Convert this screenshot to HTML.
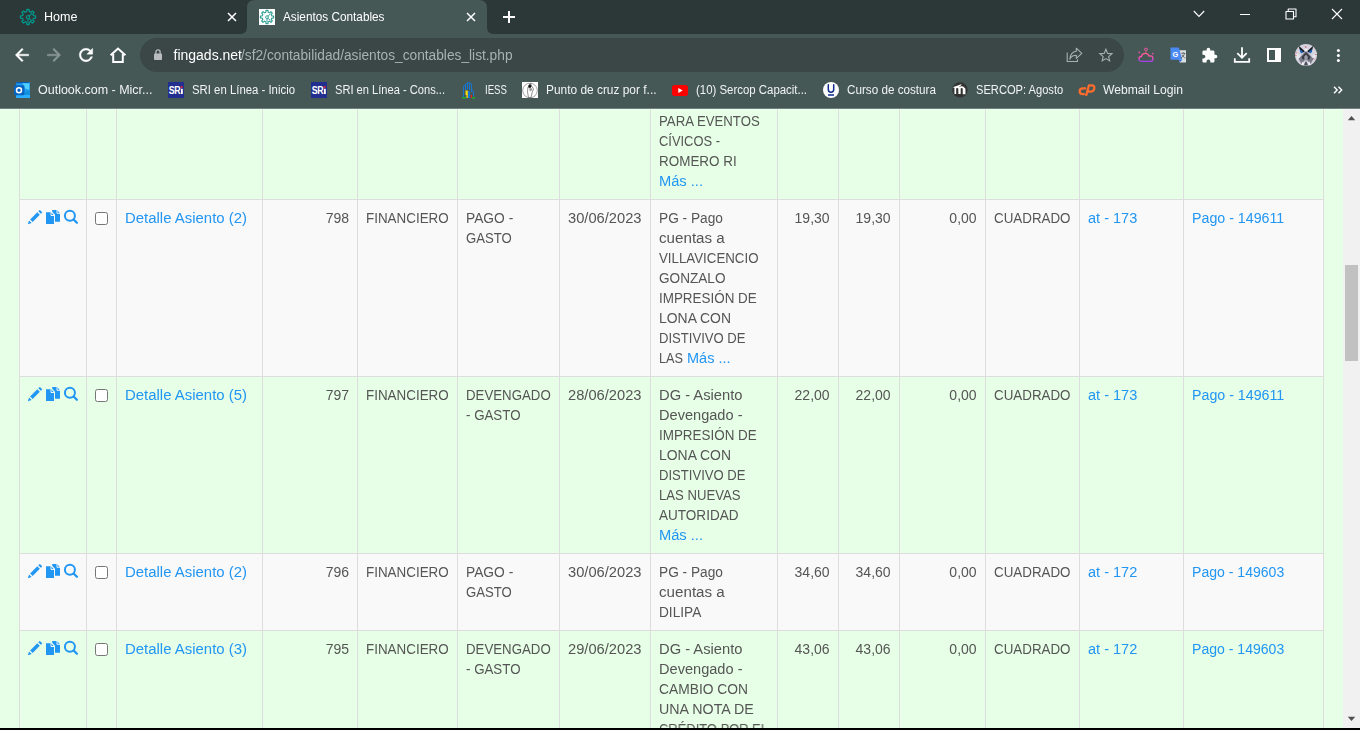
<!DOCTYPE html>
<html><head><meta charset="utf-8"><title>Asientos Contables</title>
<style>
html,body{margin:0;padding:0;width:1360px;height:730px;overflow:hidden;background:#e6ffe6;font-family:"Liberation Sans",sans-serif;}
.abs,.t,.r,.v,.h{position:absolute}
.t{white-space:pre;line-height:20px;height:20px;transform-origin:0 50%}
.r{left:19px;width:1305px}
.v{top:109px;width:1px;height:619px;background:#ddd}
.h{left:19px;width:1305px;height:1px;background:#ddd}
svg{position:absolute;overflow:visible}
.cb{position:absolute;left:95px;width:13px;height:13px;box-sizing:border-box;border:1px solid #767676;border-radius:2.5px;background:#fff}
</style></head><body>
<!-- page rows -->
<div class="r" style="top:200px;height:176px;background:#f9f9f9"></div>
<div class="r" style="top:554px;height:76px;background:#f9f9f9"></div>
<!-- horizontal borders -->
<div class="h" style="top:199px"></div><div class="h" style="top:376px"></div><div class="h" style="top:553px"></div><div class="h" style="top:630px"></div>
<!-- vertical borders -->
<div class="v" style="left:19px"></div><div class="v" style="left:86px"></div><div class="v" style="left:116px"></div><div class="v" style="left:262px"></div><div class="v" style="left:357px"></div><div class="v" style="left:457px"></div><div class="v" style="left:559px"></div><div class="v" style="left:650px"></div><div class="v" style="left:777px"></div><div class="v" style="left:838px"></div><div class="v" style="left:899px"></div><div class="v" style="left:985px"></div><div class="v" style="left:1079px"></div><div class="v" style="left:1183px"></div><div class="v" style="left:1323px"></div>
<!-- checkboxes -->
<div class="cb" style="top:212px"></div><div class="cb" style="top:389px"></div><div class="cb" style="top:566px"></div><div class="cb" style="top:643px"></div>
<svg style="left:28px;top:210px" width="14" height="14" viewBox="0 0 14 14"><g transform="matrix(0.011667,0,0,-0.011667,0,14.1167)" fill="#2196f3"><path d="M1011 1210q19 0 33 -13l153 -153q13 -14 13 -33t-13 -33l-99 -92l-214 214l95 96q13 14 32 14zM1013 800l-615 -614l-214 214l614 614zM317 96l-333 -112l110 335z"/></g></svg><svg style="left:46px;top:210px" width="14" height="14" viewBox="0 0 14 14"><path d="M0 2.200H5L8 5.500V14H0Z" fill="#2196f3"/><path d="M5 2.200V5.500H8" stroke="#fff" stroke-width="0.900" fill="none"/><path d="M6.200 0H11L14 3.300V11.800H9V4.700L6.200 1.700Z" fill="#2196f3"/><path d="M11 0V3.300H14" stroke="#fff" stroke-width="0.900" fill="none"/></svg><svg style="left:63px;top:210px" width="15" height="14" viewBox="0 0 15 14"><circle cx="6.900" cy="5.800" r="5" fill="none" stroke="#2196f3" stroke-width="2"/><path d="M10.600 9.500L13.900 12.800" stroke="#2196f3" stroke-width="2.300" stroke-linecap="round"/></svg><svg style="left:28px;top:387px" width="14" height="14" viewBox="0 0 14 14"><g transform="matrix(0.011667,0,0,-0.011667,0,14.1167)" fill="#2196f3"><path d="M1011 1210q19 0 33 -13l153 -153q13 -14 13 -33t-13 -33l-99 -92l-214 214l95 96q13 14 32 14zM1013 800l-615 -614l-214 214l614 614zM317 96l-333 -112l110 335z"/></g></svg><svg style="left:46px;top:387px" width="14" height="14" viewBox="0 0 14 14"><path d="M0 2.200H5L8 5.500V14H0Z" fill="#2196f3"/><path d="M5 2.200V5.500H8" stroke="#fff" stroke-width="0.900" fill="none"/><path d="M6.200 0H11L14 3.300V11.800H9V4.700L6.200 1.700Z" fill="#2196f3"/><path d="M11 0V3.300H14" stroke="#fff" stroke-width="0.900" fill="none"/></svg><svg style="left:63px;top:387px" width="15" height="14" viewBox="0 0 15 14"><circle cx="6.900" cy="5.800" r="5" fill="none" stroke="#2196f3" stroke-width="2"/><path d="M10.600 9.500L13.900 12.800" stroke="#2196f3" stroke-width="2.300" stroke-linecap="round"/></svg><svg style="left:28px;top:564px" width="14" height="14" viewBox="0 0 14 14"><g transform="matrix(0.011667,0,0,-0.011667,0,14.1167)" fill="#2196f3"><path d="M1011 1210q19 0 33 -13l153 -153q13 -14 13 -33t-13 -33l-99 -92l-214 214l95 96q13 14 32 14zM1013 800l-615 -614l-214 214l614 614zM317 96l-333 -112l110 335z"/></g></svg><svg style="left:46px;top:564px" width="14" height="14" viewBox="0 0 14 14"><path d="M0 2.200H5L8 5.500V14H0Z" fill="#2196f3"/><path d="M5 2.200V5.500H8" stroke="#fff" stroke-width="0.900" fill="none"/><path d="M6.200 0H11L14 3.300V11.800H9V4.700L6.200 1.700Z" fill="#2196f3"/><path d="M11 0V3.300H14" stroke="#fff" stroke-width="0.900" fill="none"/></svg><svg style="left:63px;top:564px" width="15" height="14" viewBox="0 0 15 14"><circle cx="6.900" cy="5.800" r="5" fill="none" stroke="#2196f3" stroke-width="2"/><path d="M10.600 9.500L13.900 12.800" stroke="#2196f3" stroke-width="2.300" stroke-linecap="round"/></svg><svg style="left:28px;top:641px" width="14" height="14" viewBox="0 0 14 14"><g transform="matrix(0.011667,0,0,-0.011667,0,14.1167)" fill="#2196f3"><path d="M1011 1210q19 0 33 -13l153 -153q13 -14 13 -33t-13 -33l-99 -92l-214 214l95 96q13 14 32 14zM1013 800l-615 -614l-214 214l614 614zM317 96l-333 -112l110 335z"/></g></svg><svg style="left:46px;top:641px" width="14" height="14" viewBox="0 0 14 14"><path d="M0 2.200H5L8 5.500V14H0Z" fill="#2196f3"/><path d="M5 2.200V5.500H8" stroke="#fff" stroke-width="0.900" fill="none"/><path d="M6.200 0H11L14 3.300V11.800H9V4.700L6.200 1.700Z" fill="#2196f3"/><path d="M11 0V3.300H14" stroke="#fff" stroke-width="0.900" fill="none"/></svg><svg style="left:63px;top:641px" width="15" height="14" viewBox="0 0 15 14"><circle cx="6.900" cy="5.800" r="5" fill="none" stroke="#2196f3" stroke-width="2"/><path d="M10.600 9.500L13.900 12.800" stroke="#2196f3" stroke-width="2.300" stroke-linecap="round"/></svg>
<!-- scrollbar -->
<div class="abs" style="left:1343px;top:109px;width:17px;height:619px;background:#f1f1f1"></div>
<div class="abs" style="left:1345px;top:265px;width:13px;height:96px;background:#c1c1c1"></div>
<!-- chrome -->
<div class="abs" style="left:0;top:0;width:1360px;height:34px;background:#2c3837"></div>
<div class="abs" style="left:0;top:34px;width:1360px;height:74px;background:#455856"></div><div class="abs" style="left:0;top:108px;width:1360px;height:1px;background:#6f807e"></div><div class="abs" style="left:0;top:109px;width:1360px;height:1px;background:rgba(255,255,255,0.3)"></div>
<svg style="left:0;top:0" width="1360" height="34" viewBox="0 0 1360 34"><path d="M239 34C245 34 247 32 247 26V8Q247 0 255 0H479Q487 0 487 8V26C487 32 489 34 495 34Z" fill="#455856"/></svg>
<div class="abs" style="left:140px;top:38px;width:984px;height:34px;border-radius:17px;background:#3a4746"></div>
<!-- tab favicons -->
<svg style="left:20px;top:9px" width="16" height="16" viewBox="0 0 16 16"><path d="M6.69 2.55 L6.87 0.48 L9.13 0.48 L9.31 2.55 L10.93 3.23 L12.52 1.89 L14.11 3.48 L12.77 5.07 L13.45 6.69 L15.52 6.87 L15.52 9.13 L13.45 9.31 L12.77 10.93 L14.11 12.52 L12.52 14.11 L10.93 12.77 L9.31 13.45 L9.13 15.52 L6.87 15.52 L6.69 13.45 L5.07 12.77 L3.48 14.11 L1.89 12.52 L3.23 10.93 L2.55 9.31 L0.48 9.13 L0.48 6.87 L2.55 6.69 L3.23 5.07 L1.89 3.48 L3.48 1.89 L5.07 3.23Z" fill="none" stroke="#00968a" stroke-width="1.3" stroke-linejoin="round"/><circle cx="8" cy="8.2" r="1.6" fill="none" stroke="#00968a" stroke-width="1.1"/><path d="M9.2 7 L12 4.4 M8 9.8 V13.5 M9 9.4 L11.8 12" stroke="#00968a" stroke-width="1.1" fill="none"/></svg>
<div class="abs" style="left:259px;top:9px;width:16px;height:16px;background:#fff"></div>
<svg style="left:260px;top:10px" width="14" height="14" viewBox="0 0 16 16"><path d="M6.69 2.55 L6.87 0.48 L9.13 0.48 L9.31 2.55 L10.93 3.23 L12.52 1.89 L14.11 3.48 L12.77 5.07 L13.45 6.69 L15.52 6.87 L15.52 9.13 L13.45 9.31 L12.77 10.93 L14.11 12.52 L12.52 14.11 L10.93 12.77 L9.31 13.45 L9.13 15.52 L6.87 15.52 L6.69 13.45 L5.07 12.77 L3.48 14.11 L1.89 12.52 L3.23 10.93 L2.55 9.31 L0.48 9.13 L0.48 6.87 L2.55 6.69 L3.23 5.07 L1.89 3.48 L3.48 1.89 L5.07 3.23Z" fill="none" stroke="#2e9e95" stroke-width="1.3" stroke-linejoin="round"/><circle cx="8" cy="8.2" r="1.6" fill="none" stroke="#2e9e95" stroke-width="1.1"/><path d="M9.2 7 L12 4.4 M8 9.8 V13.5 M9 9.4 L11.8 12" stroke="#2e9e95" stroke-width="1.1" fill="none"/></svg>
<!-- tab close / new tab -->
<svg style="left:227px;top:12px" width="10" height="10" viewBox="0 0 10 10"><path d="M1 1L9 9M9 1L1 9" stroke="#fff" stroke-width="1.5"/></svg>
<svg style="left:466px;top:12px" width="10" height="10" viewBox="0 0 10 10"><path d="M1 1L9 9M9 1L1 9" stroke="#fff" stroke-width="1.5"/></svg>
<svg style="left:502px;top:10px" width="14" height="14" viewBox="0 0 14 14"><path d="M7 1V13M1 7H13" stroke="#fff" stroke-width="2"/></svg>
<!-- window controls -->
<svg style="left:1193px;top:10px" width="12" height="8" viewBox="0 0 12 8"><path d="M0.8 1L6 6.4L11.2 1" stroke="#fff" stroke-width="1.1" fill="none"/></svg>
<div class="abs" style="left:1240px;top:14px;width:10px;height:1px;background:#fff"></div>
<svg style="left:1285px;top:8px" width="12" height="12" viewBox="0 0 12 12"><path d="M1 3.5H8.5V11H1Z M3.2 3.5V1H11V8.8H8.5" stroke="#fff" stroke-width="1.1" fill="none" stroke-linejoin="round"/></svg>
<svg style="left:1332px;top:9px" width="10" height="10" viewBox="0 0 10 10"><path d="M0 0L10 10M10 0L0 10" stroke="#fff" stroke-width="1.1"/></svg>
<!-- nav icons -->
<svg style="left:12px;top:45px" width="20" height="20" viewBox="0 0 24 24"><path d="M20 11H7.830l5.590-5.590L12 4l-8 8 8 8 1.410-1.410L7.830 13H20v-2z" fill="#fff" stroke="#fff" stroke-width="0.500"/></svg>
<svg style="left:44px;top:45px" width="20" height="20" viewBox="0 0 24 24"><path d="M12 4l-1.410 1.410L16.170 11H4v2h12.170l-5.580 5.590L12 20l8-8z" fill="#8b9897" stroke="#8b9897" stroke-width="0.500"/></svg>
<svg style="left:76px;top:45px" width="20" height="20" viewBox="0 0 24 24"><path d="M17.650 6.350C16.200 4.900 14.210 4 12 4c-4.420 0-7.990 3.580-7.990 8s3.570 8 7.990 8c3.730 0 6.840-2.550 7.730-6h-2.080c-.820 2.330-3.040 4-5.650 4-3.310 0-6-2.690-6-6s2.690-6 6-6c1.660 0 3.140.690 4.220 1.780L13 11h7V4l-2.350 2.350z" fill="#fff" stroke="#fff" stroke-width="0.500"/></svg>
<svg style="left:108px;top:46px" width="20" height="18" viewBox="0 0 20 18"><path d="M2.600 9.300L10 2.500L17.400 9.300" stroke="#fff" stroke-width="2" fill="none"/><path d="M5.200 8V16H14.800V8" stroke="#fff" stroke-width="2" fill="none"/></svg>
<!-- lock -->
<svg style="left:153px;top:49px" width="10" height="12" viewBox="0 0 10 12"><rect x="1" y="4.400" width="8" height="6.600" rx="0.800" fill="#b9bdbe"/><path d="M2.900 5V3a2.100 2.100 0 0 1 4.200 0V5" stroke="#b9bdbe" stroke-width="1.300" fill="none"/></svg>
<!-- share -->
<svg style="left:1066px;top:47px" width="17" height="16" viewBox="0 0 17 16"><path d="M1.200 5.500V14.500H11.500V12.300" stroke="#a6b0af" stroke-width="1.100" fill="none"/><path d="M10.300 1.200L15.800 6.300L10.300 11.300V8.300C7 8.300 5 9.500 3.800 12.300C4.200 8 6.300 4.800 10.300 4.300Z" stroke="#a6b0af" stroke-width="1.100" fill="none" stroke-linejoin="round"/></svg>
<!-- star -->
<svg style="left:1098px;top:47px" width="16" height="16" viewBox="-0.700 -0.900 17.600 17.600"><path d="M8 1.600L9.900 6.100L14.700 6.500L11 9.700L12.100 14.400L8 11.900L3.900 14.400L5 9.700L1.300 6.500L6.100 6.100Z" stroke="#a6b0af" stroke-width="1.200" fill="none" stroke-linejoin="miter"/></svg>
<!-- cloud extension -->
<svg style="left:1138px;top:47px" width="16" height="16" viewBox="0 0 16 16"><defs><linearGradient id="cg" x1="0" y1="0" x2="0" y2="1"><stop offset="0" stop-color="#ff5f8f"/><stop offset="0.550" stop-color="#f04fb0"/><stop offset="1" stop-color="#a43ff0"/></linearGradient></defs><path d="M3.600 14.400C1.800 14.400 0.900 13.200 0.900 11.900C0.900 10.500 2 9.500 3.300 9.500C3.700 7.600 5.300 6.400 7.200 6.400C9 6.400 10.500 7.500 11 9.100C11.400 8.900 11.800 8.900 12.200 8.900C13.800 8.900 15 10.100 15 11.700C15 13.200 13.800 14.400 12.300 14.400Z" stroke="url(#cg)" stroke-width="1.300" fill="none"/><ellipse cx="8" cy="2.300" rx="1.600" ry="1.100" stroke="#f05aa8" stroke-width="0.900" fill="none"/><path d="M8 3.500V5.800" stroke="#ff6a8a" stroke-width="0.800"/><circle cx="1.300" cy="5.400" r="0.900" fill="#e44fb0"/><circle cx="14.800" cy="6.600" r="0.900" fill="#e44fb0"/></svg>
<!-- translate extension -->
<svg style="left:1170px;top:47px" width="17" height="17" viewBox="0 0 17 17"><path d="M6.500 3.300H16V15.500H9.600Z" fill="#dcdfe0"/><path d="M9.600 15.500L12.300 12.800H9Z" fill="#3367d6"/><path d="M0.500 0.500H8.800L12.300 12.800H0.500Z" fill="#4a8af4"/><text x="2.600" y="9.600" font-family="Liberation Sans,sans-serif" font-size="7.500" font-weight="700" fill="#fff">G</text><path d="M11.300 6.300H15.300M13.300 5.400V6.300M14.600 6.300C14.200 8.300 12.800 10 11 11M12 7.800C12.800 9.500 14 10.500 15.300 11.200" stroke="#555c60" stroke-width="0.900" fill="none"/></svg>
<!-- puzzle -->
<svg style="left:1201px;top:47px" width="17" height="17" viewBox="0 0 24 24"><path d="M20.500 11H19V7c0-1.100-.9-2-2-2h-4V3.500C13 2.120 11.880 1 10.500 1S8 2.120 8 3.500V5H4c-1.100 0-1.990.9-1.990 2v3.800H3.500c1.490 0 2.700 1.210 2.700 2.700s-1.210 2.700-2.700 2.700H2V20c0 1.100.9 2 2 2h3.800v-1.500c0-1.490 1.210-2.700 2.700-2.700 1.490 0 2.700 1.210 2.700 2.700V22H17c1.100 0 2-.9 2-2v-4h1.500c1.380 0 2.500-1.120 2.500-2.500S21.880 11 20.500 11z" fill="#fff"/></svg>
<!-- download -->
<svg style="left:1233px;top:46px" width="18" height="18" viewBox="0 0 18 18"><path d="M9 1.200V11.500M4.300 7.200L9 11.800L13.700 7.200" stroke="#fff" stroke-width="1.800" fill="none"/><path d="M1.800 12.200V15.800H16.200V12.200" stroke="#fff" stroke-width="1.800" fill="none"/></svg>
<!-- side panel -->
<div class="abs" style="left:1267px;top:48px;width:14px;height:14px;box-sizing:border-box;border:2px solid #fff;border-right-width:6.500px"></div>
<!-- avatar -->
<svg style="left:1295px;top:44px" width="22" height="22" viewBox="0 0 22 22"><defs><clipPath id="avc"><circle cx="11" cy="11" r="11"/></clipPath></defs><g clip-path="url(#avc)"><rect width="22" height="22" fill="#d6d3df"/><path d="M0 8L5 12L3 17Z M22 8L17 12L19 17Z" fill="#e8e6ee"/><path d="M11 6.500L18.500 15L15.500 20L11 15L6.500 20L3.500 15Z" fill="#7b7e8a"/><path d="M11 8L15.500 13L14 16L11 13L8 16L6.500 13Z" fill="#3a3c46"/><path d="M11 10.500L13 13L11 17.500L9 13Z" fill="#9a9ca8"/><path d="M11 17L13.500 21.500H8.500Z" fill="#4a4c58"/><path d="M7.500 17.500L9.500 20.500L6.500 21Z M14.500 17.500L12.500 20.500L15.500 21Z" fill="#f4f3f8"/><path d="M3.800 1.800L9.800 7.200L8.200 8.600L4.600 5.600Z M18.200 1.800L12.200 7.200L13.800 8.600L17.400 5.600Z" fill="#14181f"/><path d="M4.800 5L8.400 8.200L6.400 9.600L5 7.800Z M17.200 5L13.600 8.200L15.600 9.600L17 7.800Z" fill="#1f63b8"/><path d="M9.500 5.500L11 4.500L12.500 5.500L11 8Z" fill="#f6f5fa"/><path d="M0.300 9H1.800M0.300 11.500H1.500M20 10.500H21.700M18.500 14L19.200 15.500M10.800 2V4" stroke="#cc4a52" stroke-width="0.800"/></g></svg>
<!-- menu dots -->
<svg style="left:1336px;top:48px" width="5" height="15" viewBox="0 0 5 15"><circle cx="2.400" cy="2.500" r="1.500" fill="#fff"/><circle cx="2.400" cy="7.500" r="1.500" fill="#fff"/><circle cx="2.400" cy="12.500" r="1.500" fill="#fff"/></svg>
<!-- bookmarks favicons -->
<svg style="left:14px;top:82px" width="16" height="16" viewBox="0 0 16 16"><rect x="2.200" y="0" width="13.800" height="16" fill="#1d9bf0"/><rect x="2.200" y="0" width="13" height="1.300" fill="#0a5cbc"/><path d="M8.500 1.300H15.200V8L11 6.500Z" fill="#4fd0ff"/><path d="M16 7.600L9 11.200L16 15.500Z" fill="#1490e0"/><path d="M2.200 13H16V16H2.200Z" fill="#2bb0ff"/><rect x="0" y="3.200" width="10.400" height="10" rx="0.800" fill="#0763c0"/><circle cx="5" cy="8.200" r="2.500" fill="none" stroke="#fff" stroke-width="1.500"/></svg>
<svg style="left:168px;top:82px" width="16" height="16" viewBox="0 0 16 16"><rect width="16" height="16" fill="#232f8e"/><text transform="translate(0.700,12) scale(0.880,1.120)" font-family="Liberation Sans,sans-serif" font-size="10" font-weight="700" fill="#fff" letter-spacing="-0.300">SR</text><rect x="12.900" y="6.800" width="1.900" height="5.200" fill="#fff"/><circle cx="13.700" cy="5" r="1.100" fill="#e0203a"/></svg>
<svg style="left:311px;top:82px" width="16" height="16" viewBox="0 0 16 16"><rect width="16" height="16" fill="#232f8e"/><text transform="translate(0.700,12) scale(0.880,1.120)" font-family="Liberation Sans,sans-serif" font-size="10" font-weight="700" fill="#fff" letter-spacing="-0.300">SR</text><rect x="12.900" y="6.800" width="1.900" height="5.200" fill="#fff"/><circle cx="13.700" cy="5" r="1.100" fill="#e0203a"/></svg>
<!-- IESS -->
<svg style="left:461px;top:81px" width="16" height="18" viewBox="0 0 16 18"><path d="M2.500 16V5.500L4.500 3.300V9 M4.500 3.300L6.500 1.800V8.500 M6.500 1.800H8.500V9 M8.500 1.800L10.500 3V11 M10.500 8.500L12.500 10V15" stroke="#1577d3" stroke-width="1" fill="none"/><path d="M4.500 9.500H6.800V17H5.500V14H4.500Z" fill="#f5dd10"/><path d="M7 10H9V17H7Z" fill="#1577d3"/><path d="M9.500 14H11V17H10Z" fill="#e8261c"/><path d="M1 16.200H5V17.400H1Z M11 16.200H14.200V17.400H11Z" fill="#10c020"/></svg>
<!-- punto de cruz -->
<div class="abs" style="left:522px;top:82px;width:16px;height:16px;background:#fff"></div>
<svg style="left:522px;top:82px" width="16" height="16" viewBox="0 0 16 16"><circle cx="8" cy="8.500" r="7.300" fill="none" stroke="#777" stroke-width="0.700"/><path d="M7 3L8.500 1.500L10 4.500L11.500 7L10 11L9 15.500H6.500L5.500 10L5.800 6Z" fill="none" stroke="#666" stroke-width="0.700"/><path d="M6.500 3.500L8.300 2L9.500 4.500L8.500 6L6.300 5.500Z" fill="#111"/><path d="M7 6.500L9.500 6L10.500 8L8 9.500Z" fill="#999"/></svg>
<!-- youtube -->
<svg style="left:672px;top:84.500px" width="16" height="11" viewBox="0 0 16 11"><rect width="16" height="11" rx="2.800" fill="#ff0000"/><path d="M6.300 2.900L10.700 5.500L6.300 8.100Z" fill="#fff"/></svg>
<!-- U -->
<svg style="left:823px;top:82px" width="16" height="16" viewBox="0 0 16 16"><circle cx="8" cy="8" r="8" fill="#fff"/><path d="M5.300 2.800V7.600A2.700 2.700 0 0 0 10.700 7.600V2.800" stroke="#0d2b8c" stroke-width="1.500" fill="none" stroke-linecap="round"/><path d="M5 13H11" stroke="#0d2b8c" stroke-width="1.500"/></svg>
<!-- moodle -->
<svg style="left:952px;top:82px" width="16" height="16" viewBox="0 0 16 16"><circle cx="8" cy="7.900" r="7.700" fill="#333"/><path d="M3.300 12V7.200A1.900 1.900 0 0 1 7.200 6.800V12 M7.800 12V7.200A1.900 1.900 0 0 1 11.600 6.800V12.200 M12.600 12.200V7.500A1.500 1.500 0 0 0 11 6" stroke="#fff" stroke-width="1.700" fill="none"/><path d="M1 5.300L9.800 2L8 4.600L3 6.300Z" fill="#fff"/></svg>
<!-- cpanel -->
<svg style="left:1078px;top:83px" width="18" height="14" viewBox="0 0 18 14"><path d="M7.200 5.400H4.900C2.700 5.400 1.700 7 1.700 8.300C1.700 9.800 2.700 11.200 4.600 11.200H6" stroke="#ff6c2c" stroke-width="2.300" fill="none" stroke-linecap="round"/><path d="M8.300 12L11 2.300H13.600C15.700 2.300 16.700 3.900 16.300 5.600C15.900 7.500 14.500 8.700 12.500 8.700H10.800" stroke="#ff6c2c" stroke-width="2.300" fill="none" stroke-linecap="round" stroke-linejoin="round"/></svg>
<!-- more bookmarks chevron -->
<svg style="left:1333px;top:86px" width="10" height="8" viewBox="0 0 10 8"><path d="M1 0.800L4.200 4L1 7.200M5.500 0.800L8.700 4L5.500 7.200" stroke="#fff" stroke-width="1.400" fill="none"/></svg>
<!-- scrollbar arrows -->
<svg style="left:1347px;top:115px" width="9" height="6" viewBox="0 0 9 6"><path d="M0.800 5.200L4.500 1L8.200 5.200Z" fill="#505050"/></svg>
<svg style="left:1347px;top:716px" width="9" height="6" viewBox="0 0 9 6"><path d="M0.800 0.800L4.500 5L8.200 0.800Z" fill="#505050"/></svg>

<div id="txt" style="position:absolute;left:0;top:0;width:1360px;height:730px;will-change:transform"><span class="t" style="top:7.00px;font-size:12px;color:#ffffff;transform:scaleX(1.0464);left:43.50px;">Home</span>
<span class="t" style="top:7.00px;font-size:12px;color:#ffffff;transform:scaleX(0.9816);left:282.50px;">Asientos Contables</span>
<span class="t" style="top:45.00px;font-size:14px;color:#ffffff;left:173.50px;">fingads.net</span>
<span class="t" style="top:45.00px;font-size:14px;color:#a7b2b1;transform:scaleX(0.9799);left:241.00px;">/sf2/contabilidad/asientos_contables_list.php</span>
<span class="t" style="top:80.00px;font-size:12px;color:#f1f3f4;transform:scaleX(1.0406);left:38.00px;">Outlook.com - Micr...</span>
<span class="t" style="top:80.00px;font-size:12px;color:#f1f3f4;transform:scaleX(0.9473);left:192.00px;">SRI en Línea - Inicio</span>
<span class="t" style="top:80.00px;font-size:12px;color:#f1f3f4;transform:scaleX(0.9264);left:335.00px;">SRI en Línea - Cons...</span>
<span class="t" style="top:80.00px;font-size:12px;color:#f1f3f4;transform:scaleX(0.8041);left:485.00px;">IESS</span>
<span class="t" style="top:80.00px;font-size:12px;color:#f1f3f4;transform:scaleX(0.9919);left:545.50px;">Punto de cruz por f...</span>
<span class="t" style="top:80.00px;font-size:12px;color:#f1f3f4;transform:scaleX(0.9510);left:695.50px;">(10) Sercop Capacit...</span>
<span class="t" style="top:80.00px;font-size:12px;color:#f1f3f4;transform:scaleX(0.9738);left:847.00px;">Curso de costura</span>
<span class="t" style="top:80.00px;font-size:12px;color:#f1f3f4;transform:scaleX(0.9272);left:975.90px;">SERCOP: Agosto</span>
<span class="t" style="top:80.00px;font-size:12px;color:#f1f3f4;transform:scaleX(1.0107);left:1102.50px;">Webmail Login</span>
<span class="t" style="top:111.00px;font-size:14px;color:#555555;transform:scaleX(0.9428);left:659.00px;">PARA EVENTOS</span>
<span class="t" style="top:131.00px;font-size:14px;color:#555555;transform:scaleX(0.9225);left:659.00px;">CÍVICOS -</span>
<span class="t" style="top:151.00px;font-size:14px;color:#555555;transform:scaleX(0.9612);left:659.00px;">ROMERO RI</span>
<span class="t" style="top:171.00px;font-size:14px;color:#2196f3;transform:scaleX(1.0472);left:658.50px;">Más ...</span>
<span class="t" style="top:208.00px;font-size:14px;color:#2196f3;transform:scaleX(1.0664);left:124.50px;">Detalle Asiento (2)</span>
<span class="t" style="top:208.00px;font-size:14px;color:#555555;right:1011.00px;">798</span>
<span class="t" style="top:208.00px;font-size:14px;color:#555555;transform:scaleX(0.9584);left:365.75px;">FINANCIERO</span>
<span class="t" style="top:208.00px;font-size:14px;color:#555555;transform:scaleX(0.9850);left:465.75px;">PAGO -</span>
<span class="t" style="top:228.00px;font-size:14px;color:#555555;transform:scaleX(0.9382);left:465.75px;">GASTO</span>
<span class="t" style="top:208.00px;font-size:14px;color:#555555;transform:scaleX(1.0488);left:568.25px;">30/06/2023</span>
<span class="t" style="top:208.00px;font-size:14px;color:#555555;transform:scaleX(0.9790);left:659.00px;">PG - Pago</span>
<span class="t" style="top:228.00px;font-size:14px;color:#555555;transform:scaleX(1.0829);left:658.50px;">cuentas a</span>
<span class="t" style="top:248.00px;font-size:14px;color:#555555;transform:scaleX(0.9496);left:658.50px;">VILLAVICENCIO</span>
<span class="t" style="top:268.00px;font-size:14px;color:#555555;transform:scaleX(0.9712);left:659.00px;">GONZALO</span>
<span class="t" style="top:288.00px;font-size:14px;color:#555555;transform:scaleX(0.9592);left:659.00px;">IMPRESIÓN DE</span>
<span class="t" style="top:308.00px;font-size:14px;color:#555555;transform:scaleX(0.9950);left:659.00px;">LONA CON</span>
<span class="t" style="top:328.00px;font-size:14px;color:#555555;transform:scaleX(0.9343);left:659.00px;">DISTIVIVO DE</span>
<span class="t" style="top:348.00px;font-size:14px;color:#555555;transform:scaleX(0.9067);left:659.00px;">LAS</span>
<span class="t" style="top:348.00px;font-size:14px;color:#2196f3;transform:scaleX(1.0353);left:687.00px;">Más ...</span>
<span class="t" style="top:208.00px;font-size:14px;color:#555555;right:530.40px;">19,30</span>
<span class="t" style="top:208.00px;font-size:14px;color:#555555;right:469.40px;">19,30</span>
<span class="t" style="top:208.00px;font-size:14px;color:#555555;right:383.40px;">0,00</span>
<span class="t" style="top:208.00px;font-size:14px;color:#555555;transform:scaleX(0.9548);left:994.00px;">CUADRADO</span>
<span class="t" style="top:208.00px;font-size:14px;color:#2196f3;transform:scaleX(1.0372);left:1088.25px;">at - 173</span>
<span class="t" style="top:208.00px;font-size:14px;color:#2196f3;transform:scaleX(1.0157);left:1192.00px;">Pago - 149611</span>
<span class="t" style="top:385.00px;font-size:14px;color:#2196f3;transform:scaleX(1.0664);left:124.50px;">Detalle Asiento (5)</span>
<span class="t" style="top:385.00px;font-size:14px;color:#555555;right:1011.00px;">797</span>
<span class="t" style="top:385.00px;font-size:14px;color:#555555;transform:scaleX(0.9584);left:365.75px;">FINANCIERO</span>
<span class="t" style="top:385.00px;font-size:14px;color:#555555;transform:scaleX(0.9473);left:465.75px;">DEVENGADO</span>
<span class="t" style="top:405.00px;font-size:14px;color:#555555;transform:scaleX(0.9509);left:465.75px;">- GASTO</span>
<span class="t" style="top:385.00px;font-size:14px;color:#555555;transform:scaleX(1.0488);left:568.25px;">28/06/2023</span>
<span class="t" style="top:385.00px;font-size:14px;color:#555555;transform:scaleX(1.0520);left:659.00px;">DG - Asiento</span>
<span class="t" style="top:405.00px;font-size:14px;color:#555555;transform:scaleX(1.0415);left:659.00px;">Devengado -</span>
<span class="t" style="top:425.00px;font-size:14px;color:#555555;transform:scaleX(0.9592);left:659.00px;">IMPRESIÓN DE</span>
<span class="t" style="top:445.00px;font-size:14px;color:#555555;transform:scaleX(0.9950);left:659.00px;">LONA CON</span>
<span class="t" style="top:465.00px;font-size:14px;color:#555555;transform:scaleX(0.9343);left:659.00px;">DISTIVIVO DE</span>
<span class="t" style="top:485.00px;font-size:14px;color:#555555;transform:scaleX(0.9380);left:659.00px;">LAS NUEVAS</span>
<span class="t" style="top:505.00px;font-size:14px;color:#555555;transform:scaleX(0.9671);left:659.00px;">AUTORIDAD</span>
<span class="t" style="top:525.00px;font-size:14px;color:#2196f3;transform:scaleX(1.0472);left:658.50px;">Más ...</span>
<span class="t" style="top:385.00px;font-size:14px;color:#555555;right:530.40px;">22,00</span>
<span class="t" style="top:385.00px;font-size:14px;color:#555555;right:469.40px;">22,00</span>
<span class="t" style="top:385.00px;font-size:14px;color:#555555;right:383.40px;">0,00</span>
<span class="t" style="top:385.00px;font-size:14px;color:#555555;transform:scaleX(0.9548);left:994.00px;">CUADRADO</span>
<span class="t" style="top:385.00px;font-size:14px;color:#2196f3;transform:scaleX(1.0372);left:1088.25px;">at - 173</span>
<span class="t" style="top:385.00px;font-size:14px;color:#2196f3;transform:scaleX(1.0157);left:1192.00px;">Pago - 149611</span>
<span class="t" style="top:562.00px;font-size:14px;color:#2196f3;transform:scaleX(1.0664);left:124.50px;">Detalle Asiento (2)</span>
<span class="t" style="top:562.00px;font-size:14px;color:#555555;right:1011.00px;">796</span>
<span class="t" style="top:562.00px;font-size:14px;color:#555555;transform:scaleX(0.9584);left:365.75px;">FINANCIERO</span>
<span class="t" style="top:562.00px;font-size:14px;color:#555555;transform:scaleX(0.9850);left:465.75px;">PAGO -</span>
<span class="t" style="top:582.00px;font-size:14px;color:#555555;transform:scaleX(0.9382);left:465.75px;">GASTO</span>
<span class="t" style="top:562.00px;font-size:14px;color:#555555;transform:scaleX(1.0488);left:568.25px;">30/06/2023</span>
<span class="t" style="top:562.00px;font-size:14px;color:#555555;transform:scaleX(0.9790);left:659.00px;">PG - Pago</span>
<span class="t" style="top:582.00px;font-size:14px;color:#555555;transform:scaleX(1.0829);left:658.50px;">cuentas a</span>
<span class="t" style="top:602.00px;font-size:14px;color:#555555;transform:scaleX(0.9755);left:659.00px;">DILIPA</span>
<span class="t" style="top:562.00px;font-size:14px;color:#555555;right:530.40px;">34,60</span>
<span class="t" style="top:562.00px;font-size:14px;color:#555555;right:469.40px;">34,60</span>
<span class="t" style="top:562.00px;font-size:14px;color:#555555;right:383.40px;">0,00</span>
<span class="t" style="top:562.00px;font-size:14px;color:#555555;transform:scaleX(0.9548);left:994.00px;">CUADRADO</span>
<span class="t" style="top:562.00px;font-size:14px;color:#2196f3;transform:scaleX(1.0372);left:1088.25px;">at - 172</span>
<span class="t" style="top:562.00px;font-size:14px;color:#2196f3;transform:scaleX(1.0043);left:1192.00px;">Pago - 149603</span>
<span class="t" style="top:639.00px;font-size:14px;color:#2196f3;transform:scaleX(1.0664);left:124.50px;">Detalle Asiento (3)</span>
<span class="t" style="top:639.00px;font-size:14px;color:#555555;right:1011.00px;">795</span>
<span class="t" style="top:639.00px;font-size:14px;color:#555555;transform:scaleX(0.9584);left:365.75px;">FINANCIERO</span>
<span class="t" style="top:639.00px;font-size:14px;color:#555555;transform:scaleX(0.9473);left:465.75px;">DEVENGADO</span>
<span class="t" style="top:659.00px;font-size:14px;color:#555555;transform:scaleX(0.9509);left:465.75px;">- GASTO</span>
<span class="t" style="top:639.00px;font-size:14px;color:#555555;transform:scaleX(1.0488);left:568.25px;">29/06/2023</span>
<span class="t" style="top:639.00px;font-size:14px;color:#555555;transform:scaleX(1.0520);left:659.00px;">DG - Asiento</span>
<span class="t" style="top:659.00px;font-size:14px;color:#555555;transform:scaleX(1.0415);left:659.00px;">Devengado -</span>
<span class="t" style="top:679.00px;font-size:14px;color:#555555;transform:scaleX(0.9863);left:659.00px;">CAMBIO CON</span>
<span class="t" style="top:699.00px;font-size:14px;color:#555555;transform:scaleX(1.0178);left:659.00px;">UNA NOTA DE</span>
<span class="t" style="top:719.00px;font-size:14px;color:#555555;transform:scaleX(0.9237);left:659.00px;">CRÉDITO POR EL</span>
<span class="t" style="top:639.00px;font-size:14px;color:#555555;right:530.40px;">43,06</span>
<span class="t" style="top:639.00px;font-size:14px;color:#555555;right:469.40px;">43,06</span>
<span class="t" style="top:639.00px;font-size:14px;color:#555555;right:383.40px;">0,00</span>
<span class="t" style="top:639.00px;font-size:14px;color:#555555;transform:scaleX(0.9548);left:994.00px;">CUADRADO</span>
<span class="t" style="top:639.00px;font-size:14px;color:#2196f3;transform:scaleX(1.0372);left:1088.25px;">at - 172</span>
<span class="t" style="top:639.00px;font-size:14px;color:#2196f3;transform:scaleX(1.0043);left:1192.00px;">Pago - 149603</span></div>
<div class="abs" style="left:0;top:728px;width:1360px;height:2px;background:#000"></div>
</body></html>
